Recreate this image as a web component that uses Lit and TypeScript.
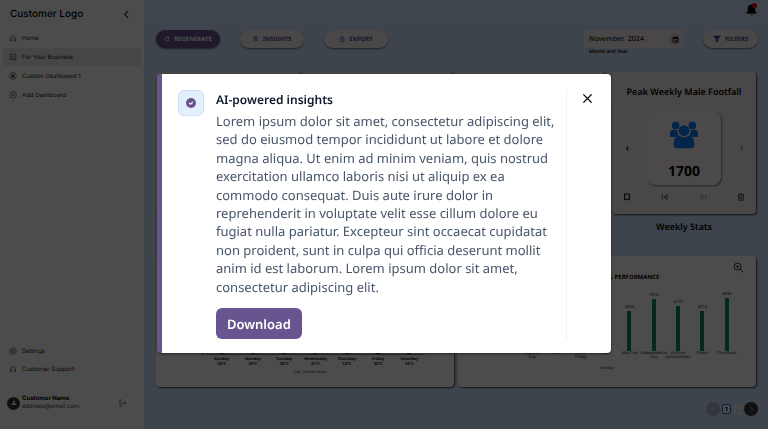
import { LitElement, html, svg, css } from "lit";
import { customElement, property } from "lit/decorators.js";

const paths: Record<string, unknown> = {
  home: svg`<path d="M4 10 12 3.5 20 10V20.5H15.5V16A3.5 3.5 0 0 0 8.500 16V20.500H4Z"/>`,
  business: svg`<rect x="3.500" y="3.500" width="17" height="17" rx="1.500"/><path d="M4 16H20M7 11 10 8 13 12 18 7"/>`,
  custom: svg`<circle cx="12" cy="12" r="10"/><path d="M12 7 13.500 10.500 17 10.800 14.500 13.200 15.200 17 12 15 8.800 17 9.500 13.200 7 10.800 10.500 10.500Z" fill="currentColor"/>`,
  add: svg`<circle cx="12" cy="12" r="10"/><path d="M12 7V17M7 12H17"/>`,
  settings: svg`<path d="M12 2 15 4 19 5 20 9 22 12 20 15 19 19 15 20 12 22 9 20 5 19 4 15 2 12 4 9 5 5 9 4Z"/><circle cx="12" cy="12" r="4"/>`,
  support: svg`<path d="M7 20H4.500V13A7.500 8.500 0 0 1 19.500 13V20H17V14H19.500M4.500 14H7V20"/>`,
  logout: svg`<path d="M9 3H3V21H9M8 12H21M16.500 7.500 21 12 16.500 16.500"/>`,
  back: svg`<path d="M16 3 7 12 16 21"/>`,
  next: svg`<path d="M8 3 17 12 8 21"/>`,
  refresh: svg`<path d="M20 13A8 8 0 1 1 18 6.500L20 8.500M20.500 3V9H14.500"/>`,
  zoom: svg`<circle cx="10" cy="10" r="7.500"/><path d="M15.500 15.500 22 22M10 7V13M7 10H13"/>`,
  share: svg`<path d="M8 9H4.500V21.500H19.500V9H16M12 15V2.500M8 6.500 12 2.500 16 6.500"/>`,
  filter: svg`<path d="M2 3H22L14.500 12.500V21L9.500 18.500V12.500Z" fill="currentColor"/>`,
  calendar: svg`<path d="M4 5H20V21H4ZM7.500 2V5M16.500 2V5"/><path d="M4 7.500H20" stroke-width="4"/><path d="M13 14H17V18H13Z" fill="currentColor" stroke="none"/>`,
  bookmark: svg`<path d="M5 3H19V21L12 17.500 5 21Z"/>`,
  first: svg`<path d="M4 5V19M18 5V19L9 12Z"/>`,
  last: svg`<path d="M20 5V19M6 5V19L15 12Z"/>`,
  trash: svg`<path d="M3 5.500H21M8.500 5V2.500H15.500V5M5 6V21.500H19V6M10 9.500V18M14 9.500V18"/>`,
  close: svg`<path d="M3 3 21 21M21 3 3 21"/>`,
  bell: svg`<path d="M12 3A6.500 6.500 0 0 0 5.500 9.500V15L3.500 18V19H20.500V18L18.500 15V9.500A6.500 6.500 0 0 0 12 3ZM9.500 21.500H14.500" fill="currentColor"/>`,
  user: svg`<circle cx="12" cy="7" r="4.500" fill="currentColor" stroke="none"/><path d="M3 20V17C3 13.500 7 12.500 12 12.500S21 13.500 21 17V20Z" fill="currentColor" stroke="none"/>`,
  people: svg`<g fill="currentColor" stroke="none"><circle cx="4.900" cy="3.800" r="3.300"/><circle cx="19.100" cy="3.800" r="3.300"/><path d="M0 13.200V11C0 8.500 1.500 7.400 3.500 7.300 4.600 8 5.600 8 6.400 7.600A6 6 0 0 0 7.600 12.300L5.800 13.700H.500ZM24 13.200V11C24 8.500 22.500 7.400 20.500 7.300 19.400 8 18.400 8 17.600 7.600A6 6 0 0 1 16.400 12.300L18.200 13.700H23.500Z"/><circle cx="12" cy="8.300" r="4.600"/><path d="M3.200 20V19C3.200 15 5.500 12.800 8.300 12.600 10.500 14.300 13.500 14.300 15.700 12.600 18.500 12.800 20.800 15 20.800 19V21C20.800 22.500 20 23.300 18.500 23.300H5.500C4 23.300 3.200 22.500 3.200 21Z"/></g>`,
  check: svg`<circle cx="12" cy="12" r="12" fill="currentColor" stroke="none"/><path d="M7.500 12 11 15 16.500 9.500" stroke="#e3effc"/>`,
};

@customElement("app-icon")
class AppIcon extends LitElement {
  @property() name = "home";
  @property({ type: Number }) size = 8;
  @property({ type: Number }) weight = 2;
  static styles = css`
    :host { display: inline-flex; flex: none; }
    svg { display: block; fill: none; stroke: currentColor; overflow: visible; }
  `;
  render() {
    return html`<svg width=${this.size} height=${this.size} viewBox="0 0 24 24" stroke-width=${this.weight} aria-hidden="true">${paths[this.name]}</svg>`;
  }
}

const week = [
  ["Sunday", "33°C"], ["Monday", "29°C"], ["Tuesday", "30°C"], ["Wednesday", "31°C"],
  ["Thursday", "32°C"], ["Friday", "32°C"], ["Saturday", "33°C"],
];

const holidays: [string, number][] = [
  ["Republic Day", 6400], ["Holi", 7100], ["Good Friday", 5900], ["Eid", 6900], ["May Day", 6020],
  ["Independence Day", 7810], ["Krishna Janmashtami", 6770], ["Diwali", 6010], ["Christmas", 8030],
];

@customElement("app-root")
class AppRoot extends LitElement {
  static styles = css`
    :host { display: block; font-family: "Noto Sans", sans-serif; color: #000; text-rendering: geometricPrecision; }
    * { box-sizing: border-box; }
    button, input { font: inherit; color: inherit; border: 0; margin: 0; padding: 0; background: none; text-rendering: inherit; }
    h1, h2, h3, p { margin: 0; }
    a { color: inherit; text-decoration: none; }
    .page { display: flex; min-height: 100vh; background: linear-gradient(#d2e6fe, #cbe3ff 35%, #cde4ff); }

    .side { width: 144px; flex: none; display: flex; flex-direction: column; background: #fff; padding: 0 3px 18px; font-family: Inter, sans-serif; font-size: 6px; color: #222; }
    .brand { display: flex; align-items: center; justify-content: space-between; height: 28px; padding: 0 10px 0 7px; margin-bottom: 1px; }
    .brand h1 { font-size: 10px; font-weight: 500; color: #000; line-height: 12px; }
    .brand button { display: flex; color: #222; }
    .menu { display: flex; flex-direction: column; gap: 1px; }
    .item { display: flex; align-items: center; gap: 5px; height: 18px; padding: 0 6px; border-radius: 2px; }
    .item app-icon { color: #445; }
    .active { background: #e9e9e9; }
    .foot { margin-top: auto; }
    .profile { display: flex; align-items: center; gap: 2px; padding: 0 14px 0 4px; margin-top: 17px; line-height: 8px; }
    .avatar { width: 13px; height: 13px; border-radius: 50%; background: #333; color: #fff; display: grid; place-items: center; }
    .who { flex: 1; }
    .who b { display: block; color: #000; font-weight: 700; }
    .who span { color: #444; }
    .profile button { display: flex; color: #445; }

    .main { flex: 1; min-width: 0; padding: 0 12px 12px; display: flex; flex-direction: column; }
    .top { display: flex; justify-content: flex-end; align-items: flex-start; height: 30px; padding-top: 3px; margin-right: -2px; }
    .bell { position: relative; display: flex; }
    .dot { position: absolute; top: 0; right: 1px; width: 5px; height: 5px; border-radius: 50%; background: #f00; }
    .tools { display: flex; align-items: flex-start; gap: 20px; margin-right: -2px; margin-bottom: 15px; height: 26px; }
    .pill { display: flex; align-items: center; justify-content: center; gap: 4px; width: 64px; height: 18px; border-radius: 9px; background: #f9eff1; color: #4f4090; font-size: 6px; font-weight: 700; box-shadow: 0 1px 2px rgba(0, 0, 0, 0.5); }
    .primary { background: #68558f; color: #fff; }
    .short { width: 55px; }
    .month { margin-left: auto; width: 99px; }
    .field { display: flex; align-items: center; height: 18px; padding: 0 2px 0 5px; background: #f9eff1; }
    .field input { flex: 1; min-width: 0; font-size: 7px; font-weight: 500; color: #111; }
    .field button { width: 12px; height: 12px; border-radius: 50%; background: #ded4d8; display: grid; place-items: center; }
    .month label { display: block; padding-left: 5px; font-size: 5px; font-weight: 600; line-height: 8px; }

    .cards { display: grid; grid-template-columns: repeat(4, minmax(0, 1fr)); gap: 8px; }
    .card { background: #fff; border-radius: 4px; box-shadow: 1px 1px 2px rgba(0, 0, 0, 0.7); }
    .stat { background: #f9eff1; display: flex; flex-direction: column; min-height: 143px; padding: 14px 10px 11px; }
    .stat h2 { font-size: 9px; font-weight: 600; line-height: 14px; text-align: center; white-space: nowrap; }
    .slide { display: flex; align-items: center; justify-content: space-between; margin: 12px 0 8px; }
    .slide button, .actions button { display: flex; width: 10px; justify-content: center; }
    .dim { color: #777; }
    .tile { display: flex; flex-direction: column; align-items: center; width: 74px; height: 74px; padding-top: 10px; border-radius: 8px; background: #faf4f5; box-shadow: 1px 1px 2px rgba(0, 0, 0, 0.5); }
    .tile app-icon { color: #0a7cff; }
    .tile b { font-size: 14px; line-height: 20px; margin-top: 13px; }
    .actions { display: flex; justify-content: space-between; }
    .section { display: grid; grid-template-columns: repeat(4, minmax(0, 1fr)); gap: 8px; height: 42px; padding-top: 6px; }
    .section h2 { grid-column: 4; text-align: center; font-size: 9px; font-weight: 600; line-height: 14px; }

    .charts { display: grid; grid-template-columns: 1fr 1fr; gap: 4px; }
    .chart { display: flex; flex-direction: column; min-height: 131px; padding: 6px 12px; font-size: 4px; line-height: 5px; }
    .more { display: flex; align-self: flex-end; color: #222; }
    .chart h3 { text-align: center; font-size: 6px; font-weight: 700; line-height: 8px; }
    .plot { display: flex; margin-top: auto; }
    .festive .plot { padding-left: 50px; padding-right: 5px; }
    .col { flex: 1; min-width: 0; display: flex; flex-direction: column; align-items: center; justify-content: flex-end; text-align: center; color: #111; }
    .bar { width: 4px; background: #0d9053; margin-top: 1px; }
    .tick { height: 10px; line-height: 4px; }
    .tick span { display: flex; justify-content: center; }
    .festive .tick { padding-top: 1px; width: 24px; }
    .axis { text-align: center; color: #444; line-height: 6px; margin-top: 5px; }
    .festive .axis { padding-bottom: 9px; }
    .weekly .plot { padding: 0 17px 0 27px; }
    .weekly .axis { padding: 0 17px 5px 27px; margin-top: 2px; }
    .scale { width: 11px; display: flex; align-items: flex-end; justify-content: flex-end; padding: 0 2px 11px 0; }
    .weekly .bar { background: #5c2a91; height: 70px; }
    .weekly .label { width: 100%; border-top: 1px solid #999; padding-top: 2px; font-weight: 700; line-height: 5px; height: 14px; }

    .pages { display: flex; justify-content: flex-end; align-items: center; gap: 2px; margin-top: 15px; margin-right: -2px; font-size: 6px; }
    .round { width: 14px; height: 14px; border-radius: 50%; background: #333; color: #fff; display: grid; place-items: center; }
    .off { background: #a8b4c4; color: #e4ebf3; }
    .num { width: 9px; height: 10px; border-radius: 2px; background: #eef1f5; color: #aaa; line-height: 10px; }
    .on { border: 1px solid #2e62c0; color: #000; font-weight: 700; line-height: 8px; background: #fff; }

    .shade { position: fixed; inset: 0; display: grid; place-items: center; padding-bottom: 2px; background: rgba(0, 0, 0, 0.7); }
    .dialog { display: flex; width: 100%; max-width: 454px; padding: 16px 16px 14px; background: #fff; border-left: 5px solid #68558f; border-radius: 4px; box-shadow: 0 1px 3px rgba(0, 0, 0, 0.5); }
    .badge { width: 26px; height: 26px; flex: none; display: grid; place-items: center; border: 1px solid #c9e0fa; border-radius: 6px; background: #e3effc; color: #68558f; }
    .body { flex: 1; padding: 0 4px 0 12px; border-right: 1px solid #f0f0f2; }
    .body h2 { font-size: 12px; font-weight: 600; line-height: 20px; color: #0f172a; }
    .body p { font-size: 13px; line-height: 1.42; color: #475569; margin: 2px 0 12px; }
    .download { display: block; height: 31px; padding: 0 11px; border-radius: 6px; background: #68558f; color: #fff; font-size: 13px; font-weight: 600; }
    .close { display: flex; align-self: flex-start; padding: 3px 2px 3px 15px; color: #000; }
  `;

  item(icon: string, text: string, active = false) {
    return html`<a href="#" class="item ${active ? "active" : ""}"><app-icon name=${icon}></app-icon>${text}</a>`;
  }

  render() {
    return html`
      <div class="page">
        <aside class="side">
          <div class="brand">
            <h1>Customer Logo</h1>
            <button aria-label="Collapse menu"><app-icon name="back" size="9" weight="3"></app-icon></button>
          </div>
          <nav class="menu">
            ${this.item("home", "Home")} ${this.item("business", "For Your Business", true)}
            ${this.item("custom", "Custom Dashboard 1")} ${this.item("add", "Add Dashboard")}
          </nav>
          <div class="foot">
            ${this.item("settings", "Settings")} ${this.item("support", "Customer Support")}
            <div class="profile">
              <span class="avatar"><app-icon name="user" size="6"></app-icon></span>
              <div class="who"><b>Customer Name</b><span>address@email.com</span></div>
              <button aria-label="Log out"><app-icon name="logout" size="8"></app-icon></button>
            </div>
          </div>
        </aside>

        <main class="main">
          <div class="top">
            <button class="bell" aria-label="Notifications"><app-icon name="bell" size="13" weight="1"></app-icon><span class="dot"></span></button>
          </div>
          <div class="tools">
            <button class="pill primary"><app-icon name="refresh" size="6" weight="3"></app-icon>REGENERATE</button>
            <button class="pill"><app-icon name="zoom" size="6" weight="3"></app-icon>INSIGHTS</button>
            <button class="pill"><app-icon name="share" size="6" weight="3"></app-icon>EXPORT</button>
            <div class="month">
              <div class="field">
                <input id="month" .value=${"November  2024"} />
                <button aria-label="Open calendar"><app-icon name="calendar" size="7" weight="3"></app-icon></button>
              </div>
              <label for="month">Month and Year</label>
            </div>
            <button class="pill short"><app-icon name="filter" size="8"></app-icon>FILTERS</button>
          </div>

          <section class="cards">
            <div class="card stat"></div>
            <div class="card stat"></div>
            <div class="card stat"></div>
            <article class="card stat">
              <h2>Peak Weekly Male Footfall</h2>
              <div class="slide">
                <button aria-label="Previous"><app-icon name="back" size="5" weight="5"></app-icon></button>
                <div class="tile"><app-icon name="people" size="28"></app-icon><b>1700</b></div>
                <button class="dim" aria-label="Next"><app-icon name="next" size="5" weight="5"></app-icon></button>
              </div>
              <div class="actions">
                <button aria-label="Bookmark"><app-icon name="bookmark" size="8" weight="3"></app-icon></button>
                <button aria-label="First"><app-icon name="first" size="8" weight="2"></app-icon></button>
                <button class="dim" aria-label="Last"><app-icon name="last" size="8" weight="2"></app-icon></button>
                <button aria-label="Delete"><app-icon name="trash" size="8" weight="2"></app-icon></button>
              </div>
            </article>
          </section>

          <div class="section"><h2>Weekly Stats</h2></div>

          <section class="charts">
            <article class="card chart weekly">
              <div class="plot">
                <span class="scale">0</span>
                ${week.map(([day, temp]) => html`<div class="col"><div class="bar"></div><div class="label">${day}<br />${temp}</div></div>`)}
              </div>
              <div class="axis">Day, Temperature</div>
            </article>
            <article class="card chart festive">
              <button class="more" aria-label="Enlarge chart"><app-icon name="zoom" size="11"></app-icon></button>
              <h3>HOLIDAY FOOTFALL PERFORMANCE</h3>
              <div class="plot">
                ${holidays.map(([name, value]) => html`<div class="col">
                  <span>${value}</span>
                  <div class="bar" style="height:${Math.round(value * 0.0066)}px"></div>
                  <div class="tick">${name.split(" ").length > 1 && name !== "May Day" ? name.split(" ").map((w) => html`<span>${w}</span>`) : name}</div>
                </div>`)}
              </div>
              <div class="axis">Holiday</div>
            </article>
          </section>

          <nav class="pages" aria-label="Pages">
            <button class="round off" aria-label="Previous page"><app-icon name="back" size="7"></app-icon></button>
            <button class="num on">1</button>
            <button class="num">2</button>
            <button class="round" aria-label="Next page"><app-icon name="next" size="7"></app-icon></button>
          </nav>
        </main>
      </div>

      <div class="shade">
        <div class="dialog" role="dialog" aria-modal="true" aria-labelledby="title">
          <span class="badge"><app-icon name="check" size="10" weight="3"></app-icon></span>
          <div class="body">
            <h2 id="title">AI-powered insights</h2>
            <p>Lorem ipsum dolor sit amet, consectetur adipiscing elit, sed do eiusmod tempor incididunt ut labore et dolore magna aliqua. Ut enim ad minim veniam, quis nostrud exercitation ullamco laboris nisi ut aliquip ex ea commodo consequat. Duis aute irure dolor in reprehenderit in voluptate velit esse cillum dolore eu fugiat nulla pariatur. Excepteur sint occaecat cupidatat non proident, sunt in culpa qui officia deserunt mollit anim id est laborum. Lorem ipsum dolor sit amet, consectetur adipiscing elit.</p>
            <button class="download">Download</button>
          </div>
          <button class="close" aria-label="Close"><app-icon name="close" size="11" weight="3"></app-icon></button>
        </div>
      </div>
    `;
  }
}
